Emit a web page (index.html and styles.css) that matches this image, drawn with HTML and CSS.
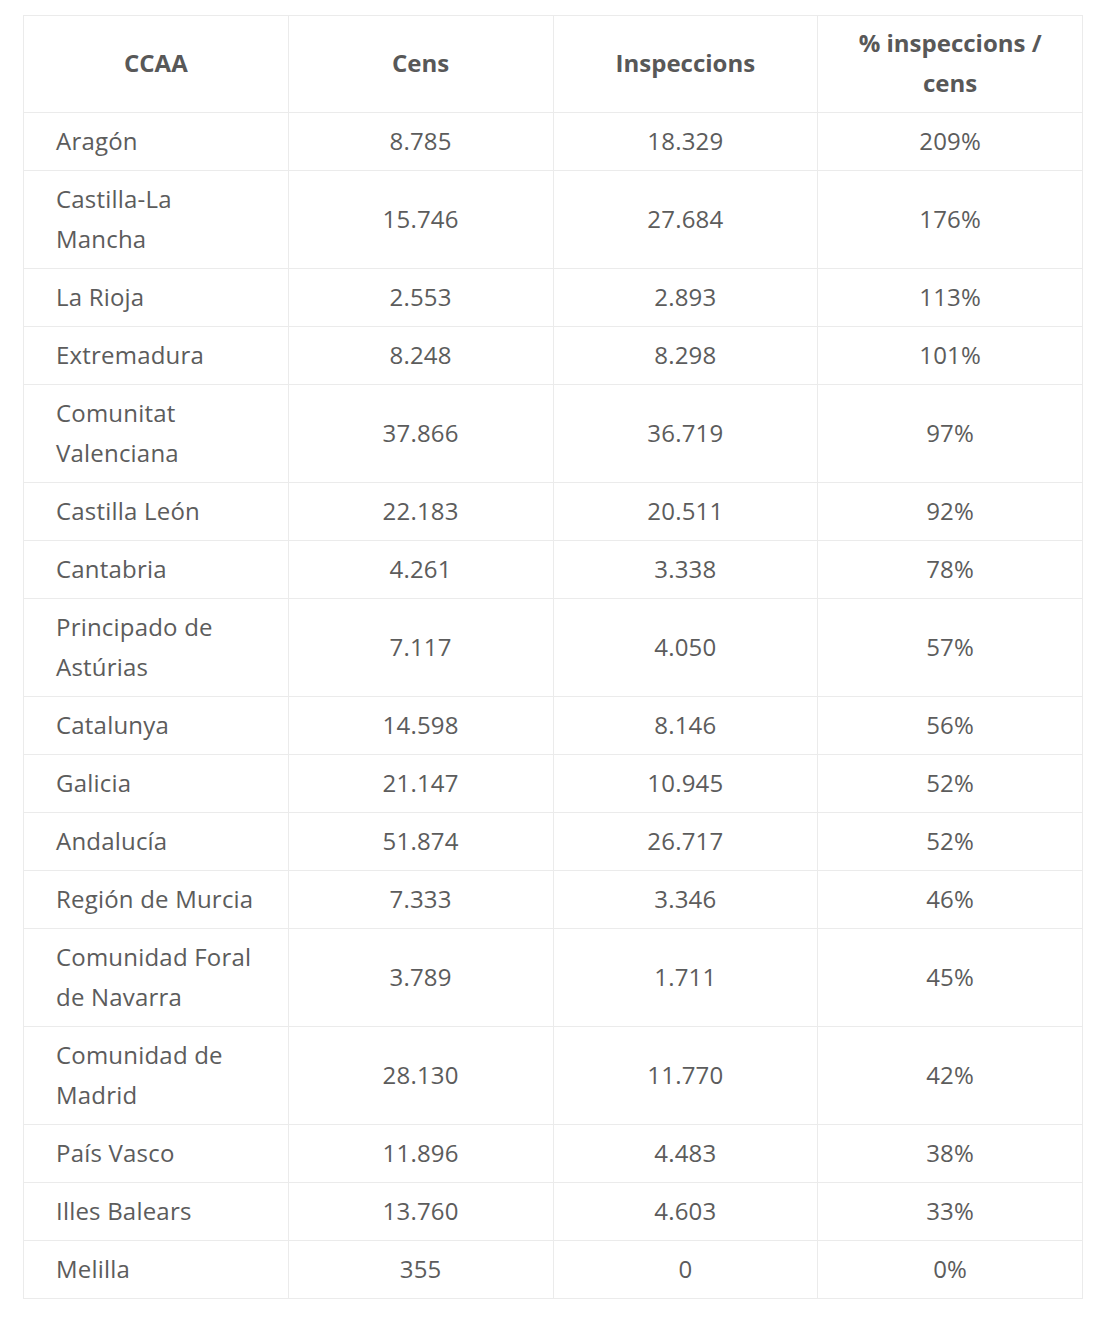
FILE: index.html
```html
<!DOCTYPE html>
<html lang="ca">
<head>
<meta charset="utf-8">
<link rel="stylesheet" href="styles.css">
</head>
<body>
<div class="wrap">
<table class="data">
<thead>
<tr><th>CCAA</th><th>Cens</th><th>Inspeccions</th><th>% inspeccions / cens</th></tr>
</thead>
<tbody>
<tr><td>Aragón</td><td>8.785</td><td>18.329</td><td>209%</td></tr>
<tr><td>Castilla-La Mancha</td><td>15.746</td><td>27.684</td><td>176%</td></tr>
<tr><td>La Rioja</td><td>2.553</td><td>2.893</td><td>113%</td></tr>
<tr><td>Extremadura</td><td>8.248</td><td>8.298</td><td>101%</td></tr>
<tr><td>Comunitat Valenciana</td><td>37.866</td><td>36.719</td><td>97%</td></tr>
<tr><td>Castilla León</td><td>22.183</td><td>20.511</td><td>92%</td></tr>
<tr><td>Cantabria</td><td>4.261</td><td>3.338</td><td>78%</td></tr>
<tr><td>Principado de Astúrias</td><td>7.117</td><td>4.050</td><td>57%</td></tr>
<tr><td>Catalunya</td><td>14.598</td><td>8.146</td><td>56%</td></tr>
<tr><td>Galicia</td><td>21.147</td><td>10.945</td><td>52%</td></tr>
<tr><td>Andalucía</td><td>51.874</td><td>26.717</td><td>52%</td></tr>
<tr><td>Región de Murcia</td><td>7.333</td><td>3.346</td><td>46%</td></tr>
<tr><td>Comunidad Foral de Navarra</td><td>3.789</td><td>1.711</td><td>45%</td></tr>
<tr><td>Comunidad de Madrid</td><td>28.130</td><td>11.770</td><td>42%</td></tr>
<tr><td>País Vasco</td><td>11.896</td><td>4.483</td><td>38%</td></tr>
<tr><td>Illes Balears</td><td>13.760</td><td>4.603</td><td>33%</td></tr>
<tr><td>Melilla</td><td>355</td><td>0</td><td>0%</td></tr>
</tbody>
</table>
</div>
</body>
</html>
```

FILE: styles.css
```css
html, body {
  margin: 0;
  padding: 0;
  background: #ffffff;
}
.wrap {
  padding: 15px 0 0 23px;
}
.data {
  width: 1060px;
  table-layout: fixed;
  border-collapse: collapse;
  font-family: "Open Sans", "Liberation Sans", sans-serif;
  font-size: 24px;
  line-height: 40px;
  color: #5c5c5c;
}
.data th,
.data td {
  width: 25%;
  border: 1px solid #ebebeb;
  text-align: center;
  vertical-align: middle;
}
.data td {
  padding: 7.5px 32px 9.5px;
  letter-spacing: 0.2px;
}
.data th {
  padding: 7px 32px 9px;
  font-weight: 700;
  color: #585858;
}
.data td:first-child {
  text-align: left;
}
```
